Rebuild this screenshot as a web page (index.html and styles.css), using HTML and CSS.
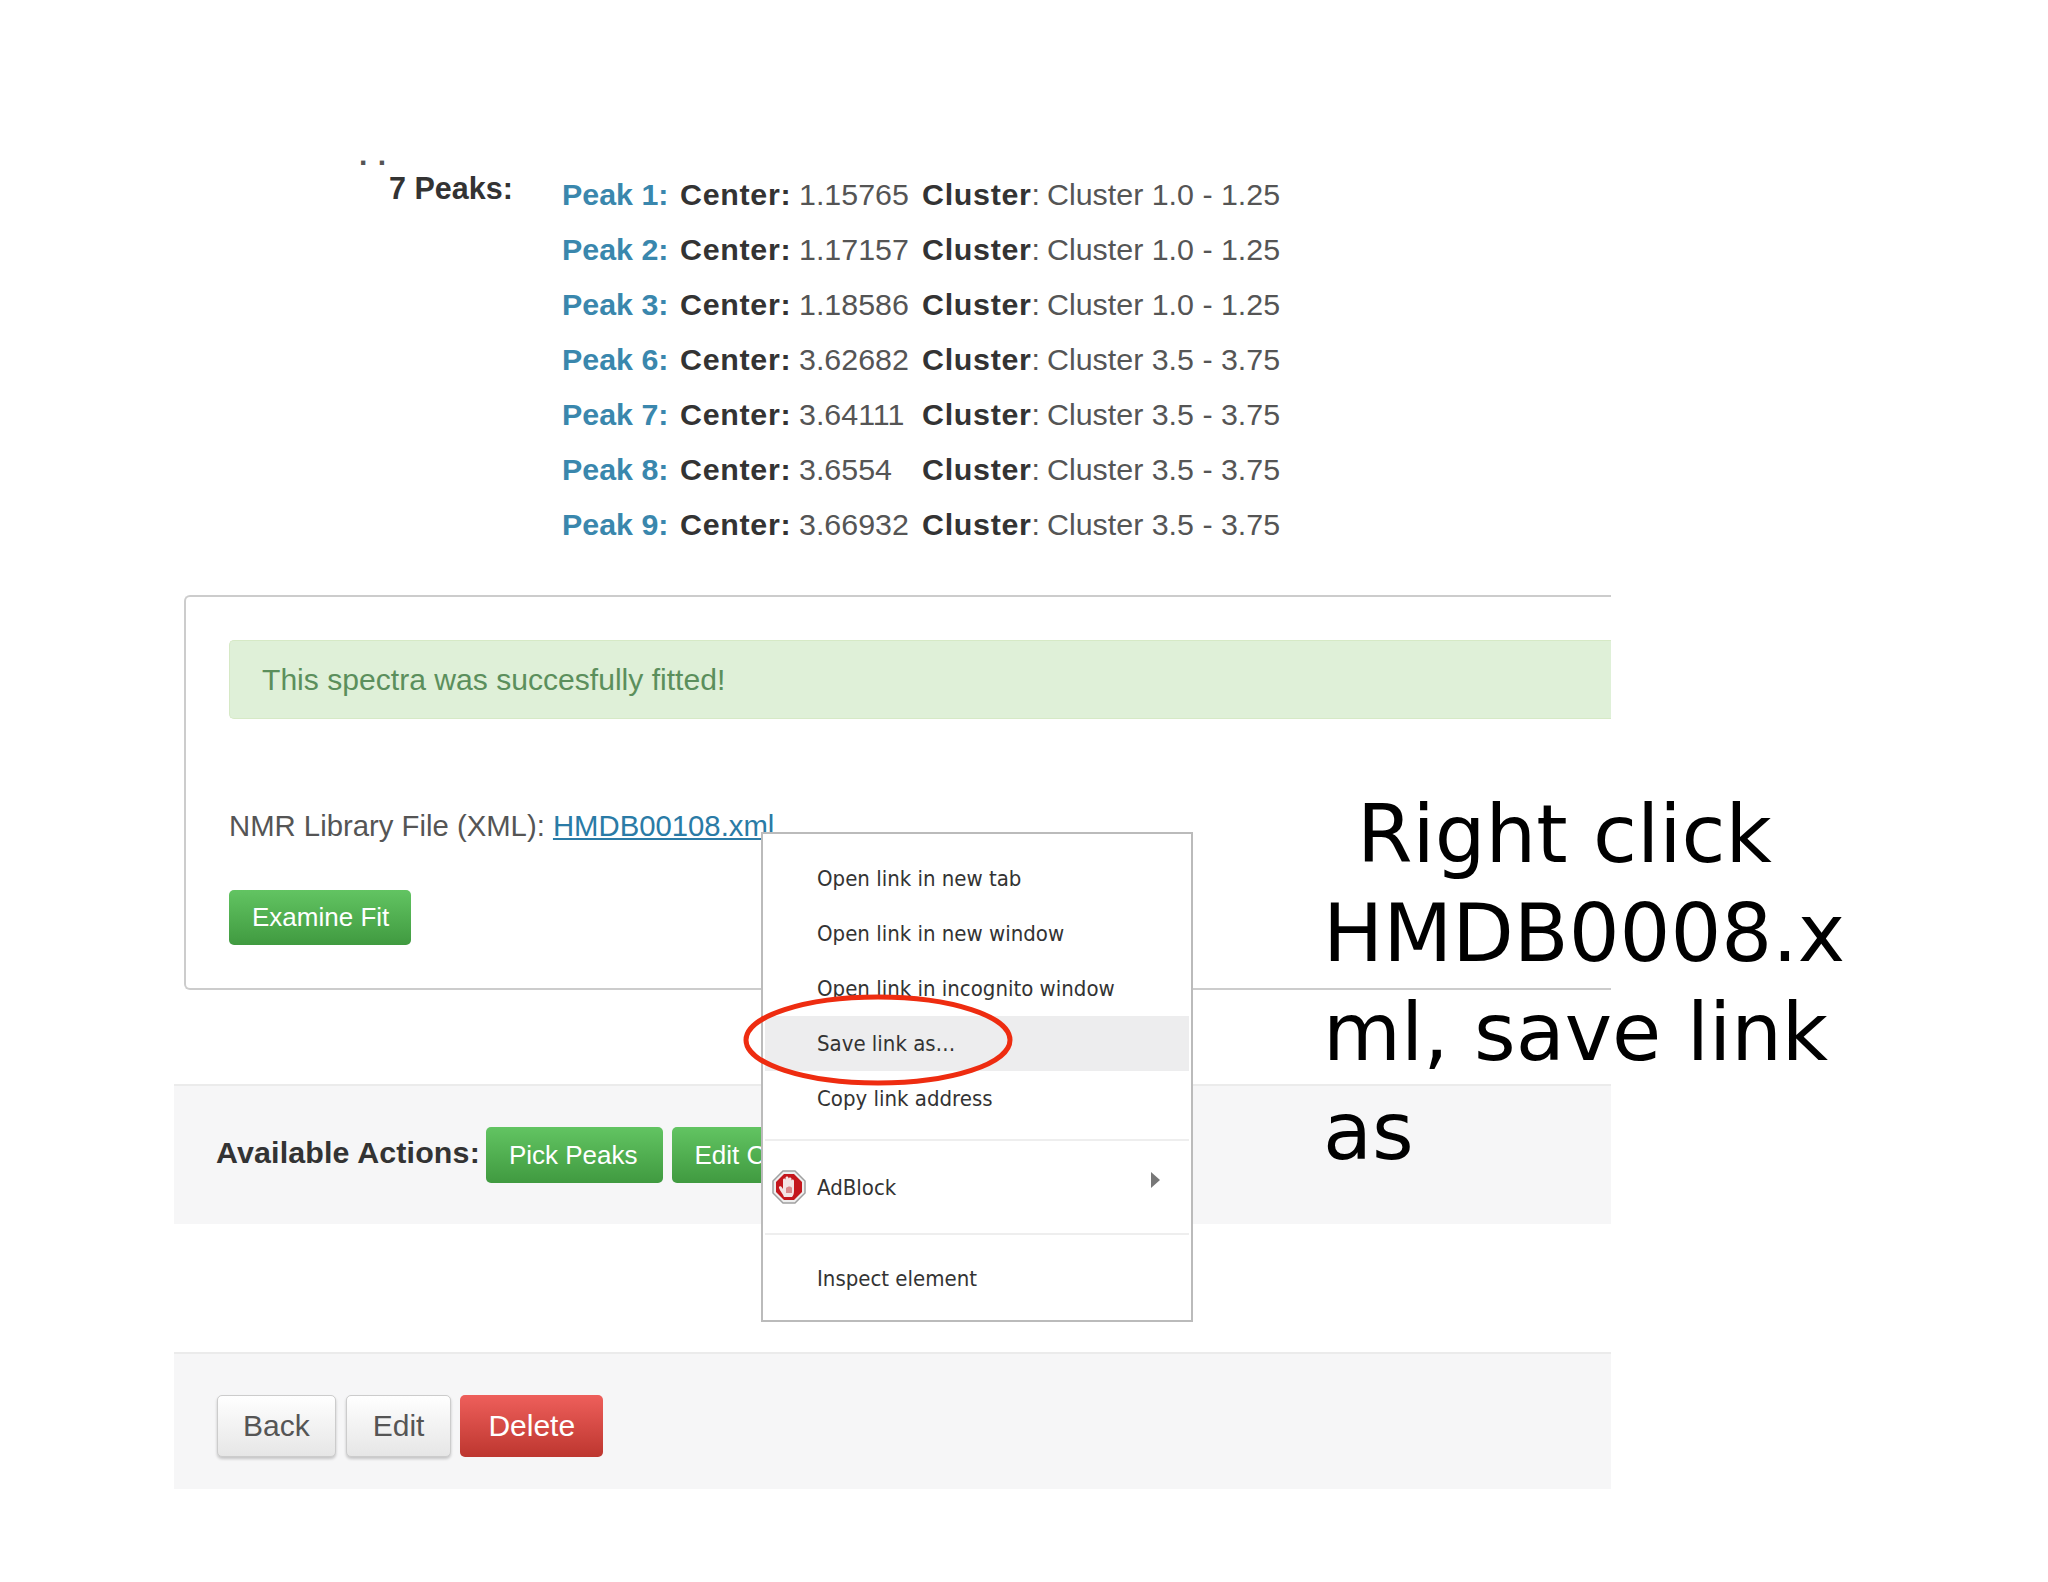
FILE: index.html
```html
<!DOCTYPE html>
<html lang="en">
<head>
  <meta charset="UTF-8">
  <title>Spectra fit</title>
  <link rel="stylesheet" href="styles.css">
</head>
<body>
  <div class="page">
    <!-- Peak list -->
    <div class="peaks">
      <div class="peaks-label">7 Peaks:</div>
      <div class="peak-table">
        <span class="peak-name">Peak 1:</span><b>Center:</b><span>1.15765</span><span><b>Cluster</b>:</span><span>Cluster 1.0 - 1.25</span>
        <span class="peak-name">Peak 2:</span><b>Center:</b><span>1.17157</span><span><b>Cluster</b>:</span><span>Cluster 1.0 - 1.25</span>
        <span class="peak-name">Peak 3:</span><b>Center:</b><span>1.18586</span><span><b>Cluster</b>:</span><span>Cluster 1.0 - 1.25</span>
        <span class="peak-name">Peak 6:</span><b>Center:</b><span>3.62682</span><span><b>Cluster</b>:</span><span>Cluster 3.5 - 3.75</span>
        <span class="peak-name">Peak 7:</span><b>Center:</b><span>3.64111</span><span><b>Cluster</b>:</span><span>Cluster 3.5 - 3.75</span>
        <span class="peak-name">Peak 8:</span><b>Center:</b><span>3.6554</span><span><b>Cluster</b>:</span><span>Cluster 3.5 - 3.75</span>
        <span class="peak-name">Peak 9:</span><b>Center:</b><span>3.66932</span><span><b>Cluster</b>:</span><span>Cluster 3.5 - 3.75</span>
      </div>
    </div>

    <!-- Fit result -->
    <div class="panel">
      <div class="alert">This spectra was succesfully fitted!</div>
      <p class="library">NMR Library File (XML): <a href="#">HMDB00108.xml</a></p>
      <button type="button" class="btn btn-green btn-fit">Examine Fit</button>
    </div>

    <!-- Actions -->
    <div class="band band-actions">
      <span class="actions-label">Available Actions:</span>
      <button type="button" class="btn btn-green">Pick Peaks</button>
      <button type="button" class="btn btn-green">Edit Clusters</button>
    </div>

    <div class="band band-footer">
      <button type="button" class="btn btn-light btn-large btn-back">Back</button>
      <button type="button" class="btn btn-light btn-large">Edit</button>
      <button type="button" class="btn btn-red btn-large">Delete</button>
    </div>
  </div>

  <!-- cut off top of the screenshot -->
  <div class="cut-dots">. .</div>

  <!-- Context menu -->
  <div class="menu">
    <div class="menu-item">Open link in new tab</div>
    <div class="menu-item">Open link in new window</div>
    <div class="menu-item">Open link in incognito window</div>
    <div class="menu-item active">Save link as…</div>
    <div class="menu-item">Copy link address</div>
    <div class="menu-sep"></div>
    <div class="menu-item menu-ext">
      <svg class="adblock" viewBox="0 0 34 34">
        <path d="M11 1h12l10 10v12L23 33H11L1 23V11z" fill="#eee" stroke="#a0a0a0" stroke-width="1.5"/>
        <path d="M12 4h10l8 8v10l-8 8H12l-8-8V12z" fill="#c4161c"/>
        <path d="M12 27c-1-3-4-6-5-9-.5-2 2-2.5 3-.5l1 1.500V10c0-2 2.500-2 2.500 0V8c0-2 3-2 3 0v1c0-2 3-2 3 0v2c0-2 2.500-2 2.500 0v10c0 3-1 5-2 6z" fill="#f3e4e4"/>
        <path d="M14 18c2-2 5-2 6 0v5h-6z" fill="#d98a8c"/>
      </svg>
      AdBlock
      <span class="arrow"></span>
    </div>
    <div class="menu-sep menu-sep-low"></div>
    <div class="menu-item">Inspect element</div>
  </div>

  <svg class="circle" viewBox="0 0 276 100">
    <ellipse cx="138" cy="48" rx="132" ry="43" fill="none" stroke="#ee2c10" stroke-width="5"/>
  </svg>

  <div class="note">Right click HMDB0008.x<br>ml, save link<br>as</div>
</body>
</html>
```

FILE: styles.css
```css
body {
  margin: 0;
  background-color: #fff;
  font-family: "Liberation Sans", Arial, sans-serif;
  color: #555;
}

.page {
  width: 1437px;
  margin-left: 174px;
  padding-top: 167px;
}

/* Peak list */
.peaks {
  display: flex;
  padding-left: 215px;
  height: 428px;
  box-sizing: border-box;
}

.peaks-label {
  width: 173px;
  margin-top: 1px;
  font-size: 30.5px;
  font-weight: bold;
  line-height: 40px;
  color: #333;
}

.peak-table {
  display: grid;
  grid-template-columns: 118px 119px 123px 125px auto;
  grid-auto-rows: 55px;
  font-size: 30.4px;
  line-height: 55px;
}

.peak-table b {
  color: #333;
  letter-spacing: 0.7px;
}

.peak-name {
  font-weight: bold;
  color: #3a87ad;
}

.cut-dots {
  position: absolute;
  left: 359px;
  top: 138px;
  font-size: 30px;
  font-weight: bold;
  line-height: 34px;
  word-spacing: 2px;
  color: #555;
}

/* Fit result */
.panel {
  margin-left: 10px;
  height: 395px;
  box-sizing: border-box;
  padding: 43px 0 0 43px;
  border: 2px solid #ccc;
  border-right: none;
  border-radius: 6px 0 0 6px;
}

.alert {
  height: 79px;
  box-sizing: border-box;
  padding-left: 32px;
  line-height: 77px;
  font-size: 30.1px;
  color: #5b8f5c;
  background-color: #dff0d8;
  border: 1px solid #d6e9c6;
  border-right: none;
  border-radius: 5px 0 0 5px;
}

.library {
  margin: 79px 0 0;
  font-size: 29.3px;
  line-height: 56px;
  color: #555;
}

.library a {
  color: #2a7ba6;
}

.btn {
  font-family: "Liberation Sans", Arial, sans-serif;
  font-size: 26px;
  height: 56px;
  padding: 0 23px;
  border: none;
  border-radius: 5px;
  color: #fff;
}

.btn-green {
  background-image: linear-gradient(#62c462, #409a40);
}

.btn-fit {
  display: block;
  height: 55px;
  margin-top: 36px;
  padding: 0 22px 0 23px;
}

.btn-light {
  color: #555;
  background-image: linear-gradient(#ffffff, #e6e6e6);
  border: 1px solid #ccc;
  box-shadow: 0 2px 3px rgba(0, 0, 0, 0.2);
}

.btn-red {
  background-image: linear-gradient(#ee5f5b, #bd362f);
}

.btn-large {
  font-size: 30px;
  height: 62px;
  padding: 0 26px;
}

.btn-back {
  padding: 0 25px;
}

.btn-red.btn-large {
  margin-left: -1px;
  padding: 0 28px;
}

/* Bottom bands */
.band {
  display: flex;
  align-items: center;
  box-sizing: border-box;
  background-color: #f6f6f7;
  border-top: 2px solid #ebebeb;
  padding-left: 42px;
}

.band-actions {
  margin-top: 94px;
  height: 140px;
  gap: 9px;
}

.band-actions .btn {
  padding: 0 25px 0 23px;
}

.band-footer {
  margin-top: 128px;
  height: 137px;
  padding-top: 8px;
  padding-left: 43px;
  gap: 10px;
}

.actions-label {
  font-size: 30.4px;
  font-weight: bold;
  letter-spacing: 0.15px;
  color: #333;
  margin-right: -3px;
  margin-bottom: 5px;
}

/* Context menu */
.menu {
  position: absolute;
  left: 761px;
  top: 832px;
  width: 432px;
  height: 490px;
  box-sizing: border-box;
  padding-top: 17px;
  background-color: #fff;
  border: 2px solid #bbb;
  font-family: "DejaVu Sans Condensed", "DejaVu Sans", sans-serif;
  font-stretch: condensed;
  font-size: 22px;
  color: #333;
}

.menu-item {
  position: relative;
  height: 55px;
  line-height: 55px;
  padding-left: 52px;
  margin: 0 2px;
}

.menu-item.active {
  background-color: #ededee;
}

.menu-sep {
  height: 2px;
  margin: 13px 2px 19px;
  background-color: #eee;
}

.menu-sep-low {
  margin: 18px 2px 16px;
}

.adblock {
  position: absolute;
  left: 7px;
  top: 10px;
  width: 34px;
  height: 34px;
}

.arrow {
  position: absolute;
  right: 29px;
  top: 12px;
  border-left: 9px solid #777;
  border-top: 8px solid transparent;
  border-bottom: 8px solid transparent;
}

.circle {
  position: absolute;
  left: 740px;
  top: 992px;
  width: 276px;
  height: 100px;
}

.note {
  position: absolute;
  left: 1323px;
  top: 785px;
  font-family: "DejaVu Sans", sans-serif;
  font-size: 80px;
  line-height: 99px;
  color: #000;
  text-indent: 34px;
  width: 560px;
}
```
